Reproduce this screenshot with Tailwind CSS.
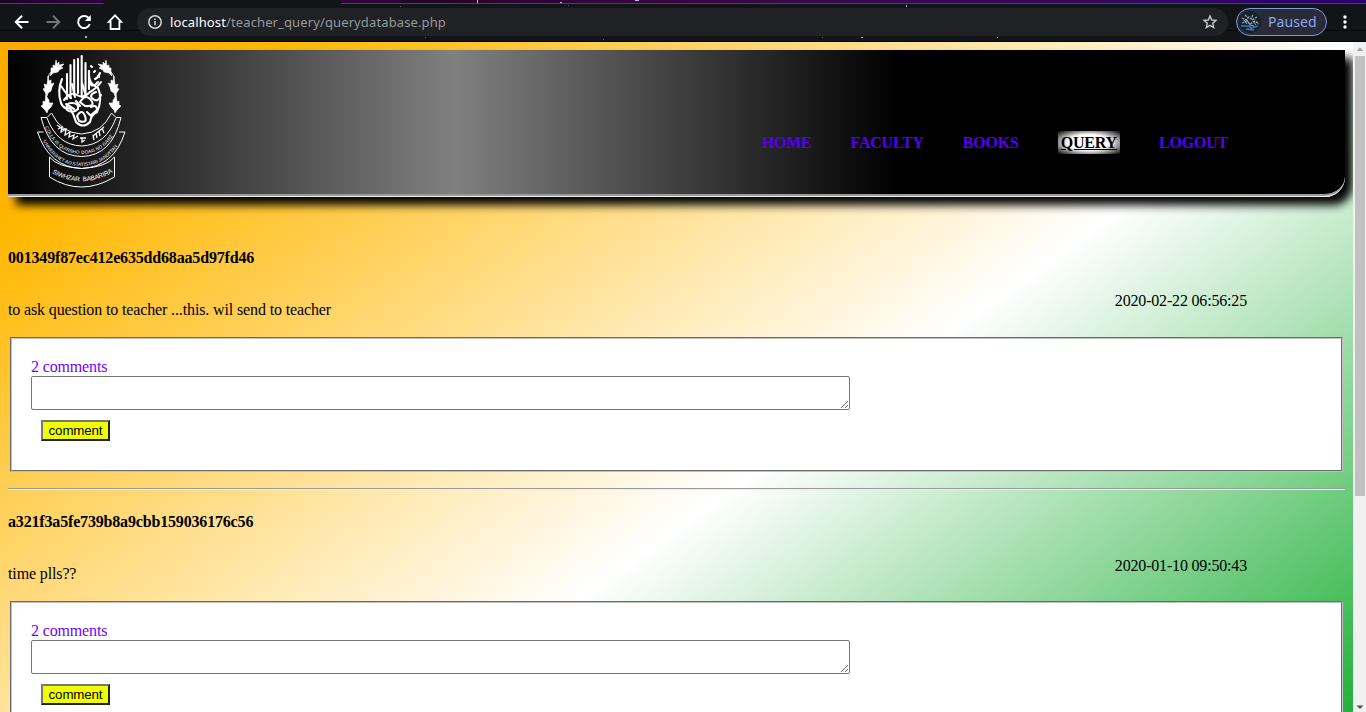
<!DOCTYPE html>
<html lang="en">
<head>
<meta charset="utf-8">
<title>querydatabase</title>
<script src="https://cdn.jsdelivr.net/npm/@tailwindcss/browser@4"></script>
</head>
<body class="flex h-[712px] w-[1366px] flex-col overflow-hidden bg-white">
<!-- browser toolbar -->
<header class="relative flex h-[42px] shrink-0 flex-col border-b border-black bg-[#121517]">
  <div class="flex h-1 shrink-0 border-b border-[#49474b] bg-linear-to-r from-[#08020f] via-[#38063f] to-[#2b0070]">
    <div class="h-[3px] w-[104px] rounded-br bg-linear-to-r from-[#1c0026] to-[#320044]"></div>
    <div class="h-1 w-[237px] bg-[#121517]"></div>
    <div class="h-[3px] w-[60px] rounded-bl bg-[#2c0435]"></div>
  </div>
  <div class="relative z-10 flex h-9 items-center">
    <svg class="ml-[13px] h-[18px] w-[18px]" viewBox="0 0 18 18" fill="none" stroke="#fff" stroke-width="2"><path d="M15.500 9H3M9 2.800 2.800 9 9 15.200"/></svg>
    <svg class="ml-[13px] h-[18px] w-[18px]" viewBox="0 0 18 18" fill="none" stroke="#737475" stroke-width="2"><path d="M2.500 9H15M9 2.800 15.200 9 9 15.200"/></svg>
    <svg class="ml-[13px] h-[18px] w-[18px]" viewBox="0 0 18 18" fill="none" stroke="#fff" stroke-width="2"><path d="M14.800 11A6 6 0 1 1 13.400 4.800L14.800 6.200"/><path d="M15.800 2v6H9.800z" fill="#fff" stroke="none"/></svg>
    <svg class="ml-[13px] h-[18px] w-[18px]" viewBox="0 0 18 18" fill="none" stroke="#fff" stroke-width="1.800"><path d="M9 2.400 2.800 8.800H4.600V16H13.400V8.800h1.800z"/></svg>
    <div class="ml-[13px] flex h-7 w-[1091px] items-center rounded-full bg-[#202124]">
      <svg class="ml-[10px] h-4 w-4" viewBox="0 0 16 16" fill="none" stroke="#d5d6d8" stroke-width="1.500"><circle cx="8" cy="8" r="6.200"/><path d="M8 7v4.300M8 4.400v1.600"/></svg>
      <div class="ml-[7px] flex whitespace-nowrap font-['Noto_Sans',sans-serif] text-[13px] leading-7 tracking-[0.12px] text-[#96989b]"><span class="text-white">localhost</span><span>/teacher_query/querydatabase.php</span></div>
      <svg class="mr-[9px] ml-auto h-[18px] w-[18px]" viewBox="0 0 18 18" fill="none" stroke="#c8c9cb" stroke-width="1.400"><path d="m9 3 1.700 4 4.300.4-3.300 2.900 1 4.200L9 12.300 5.300 14.500l1-4.200L3 7.400 7.300 7z"/></svg>
    </div>
    <div class="ml-2 flex h-7 w-[91px] items-center rounded-full border border-[#7e98e0] bg-[#292b39]">
      <svg class="ml-[2px] h-[22px] w-[22px]" viewBox="0 0 22 22"><circle cx="11" cy="11" r="11" fill="#17212b"/><path d="M3 7l4 2 3-3 3 3 5-3M3 12l5-2 3 3 5-3 4 3M6 4l3 3M14 4l-2 4" stroke="#8aa3b4" stroke-width="1.300" fill="none" stroke-dasharray="2.500 .8"/><path d="M2 15h8l2 2 7-2M7 18l8 1" stroke="#3975b5" stroke-width="1.700" fill="none"/><path d="M8 9l3 5 4 1M5 9l3 4M14 10l3 4" stroke="#a5adc0" fill="none"/></svg>
      <span class="ml-[7px] font-['Noto_Sans',sans-serif] text-[14px] leading-5 tracking-[0.1px] text-[#8fa6ea]">Paused</span>
    </div>
    <svg class="ml-[14px] h-4 w-[8px]" viewBox="0 0 8 16" fill="#fff"><circle cx="4" cy="3" r="1.700"/><circle cx="4" cy="8" r="1.700"/><circle cx="4" cy="13" r="1.700"/></svg>
  </div>
  <!-- star field of the theme -->
  <svg class="absolute inset-0 h-[42px] w-[1366px]" viewBox="0 0 1366 42"><path d="M0 30.500h139M1227 30.500h139" stroke="#050607"/><g fill="#e9e6f5"><path d="M477 0h1v3h-1zM560 2h2v1h-2zM635 0h4v1h-4zM906 5h1v2h-1zM861 37h2v1h-2zM997 37h1v1h-1z" opacity=".8"/><path d="M400 6h1v1h-1zM568 5h1v1h-1zM603 39h1v1h-1zM425 37h1v1h-1zM822 37h1v1h-1z" opacity=".35"/><path d="M85 36h2v2h-2z" fill="#b6b86a"/></g></svg>
</header>

<div class="flex min-h-0 flex-1">
  <!-- page -->
  <main class="h-[670px] w-[1353px] overflow-hidden bg-[linear-gradient(to_bottom_right,#ffaa00_0%,#ffb700_10%,#fff_50%,#00a41c_90%)] bg-[length:1353px_974px] px-2 pt-2 font-['Liberation_Serif',serif] text-[16px] leading-[18px] text-black">
    <div class="flex h-[147px] rounded-br-[20px] border-b-[3px] border-[#eee] [border-bottom-style:groove] bg-[linear-gradient(to_right,#000,#808080,#000,#000)] shadow-[8px_8px_10px_#000]">
      <svg class="ml-[29px] mt-[5px] h-[133px] w-[90px]" viewBox="0 0 90 133" fill="none" stroke="#fff">
        <!-- leaf wreath -->
        <g fill="#fff" stroke="#fff" stroke-width=".6">
          <path d="M19 5l1 4 2-2 0 3 5-1-3 3 2 1-4 2-1 2-5 1-3 3 1-4 0-4 2 0 0-3 2 1z"/>
          <path d="M11 21l1 5 2-1 0 4 3-1-2 4-1 4-3 2-1 3-2-4-2-3 2-1-1-4 3 1z"/>
          <path d="M9 40l2 4 1 1 0 3 4 0-2 4-3 3-1 3-2-3-4-4 2-1 0-4 2 1z"/>
          <path d="M69 5l-1 4-2-2 0 3-5-1 3 3-2 1 4 2 1 2 5 1 3 3-1-4 0-4-2 0 0-3-2 1z"/>
          <path d="M77 21l-1 5-2-1 0 4-3-1 2 4 1 4 3 2 1 3 2-4 2-3-2-1 1-4-3 1z"/>
          <path d="M79 40l-2 4-1 1 0 3-4 0 2 4 3 3 1 3 2-3 4-4-2-1 0-4-2 1z"/>
        </g>
        <path d="M14 17q-3 3-3 6M9 38v5M74 17q3 3 3 6M79 38v5" stroke-width=".8"/>
        <!-- calligraphy -->
        <g stroke-width="2.100" stroke-linecap="round">
          <path d="M25 24Q20 36 24 48Q27 55 33 53Q37 60 39 67Q46 74 53 67Q54 60 60 57Q66 44 61 33"/>
          <path d="M30 44V19M33.500 43V10M37.200 40V5M41 38V4M44.700 42V1M48.500 38V8M52 34V16"/>
          <path d="M27 45q7-9 13-5t13-3q7-4 11-10M24 31q6 9 10 12M52 27q3 7 9 0M52 16q-1 12 6 15M58 24q3-1 5-6"/>
          <path d="M30 55q-2-7 5-7t6 6q-5 5-11 1M43 47q6-9 11-2t-6 6zM40 61q5-8 8 0t-6 5zM54 52q6-3 6 3l-6 5M57 17l1-1M61 21l1 1M54 11l1 1M29 49l8 5M50 57l4 4"/>
          <path d="M59 37q-8 3-3 7t8-4M35 29l3 13M45 28l4 13M39 46l4 5"/>
        </g>
        <!-- ribbons -->
        <g stroke-width="1">
          <path d="M14.500 58Q24 78 44.500 79 65 78 74.500 58L79 62.500H84Q75 101 44.500 101.500 14 101 4 62.500H10z"/>
          <path d="M10 63Q20 90 44.500 91 69 90 79 63"/>
          <path d="M6.500 77H.5Q12 112 44.500 113.500 77 112 88 77H82"/>
          <path d="M12.500 102V122Q44 142 77.500 122V102M12.500 102Q20 112 44.500 113.500 70 112 77.500 102"/>
          <path d="M20 70l7 5M21 74l4-2-1 5 5-3-1 6 5-3-1 5 5-2-1 4 5-3M43 83h6M45 83v4l3-2M56 81l11-9M57 85l-1-5M60 83l-1-5M63 81l-1-5M67 78l-2-5" stroke-width="1.300"/>
        </g>
        <path id="arcA" d="M8 72Q19 98.500 44.500 99 70 98.500 81 71" stroke="none"/>
        <path id="arcB" d="M6 86Q18 110 44.500 111 71 110 84 85" stroke="none"/>
        <path id="arcC" d="M15 118Q45 135 76 117" stroke="none"/>
        <g fill="#fff" stroke="none" font-family="Liberation Sans" font-size="4.600">
          <text><textPath href="#arcA" textLength="86">COLLA IS QUIRSHO DOAG NO GARZ</textPath></text>
          <text><textPath href="#arcB" textLength="91">UNIVERSHET AO STATISTARI JANOTTAN</textPath></text>
          <text font-size="6.500"><textPath href="#arcC" textLength="64" xml:space="preserve">SIWHZAR  BABARIRA</textPath></text>
        </g>
      </svg>
      <nav class="mt-[81px] ml-auto flex h-6 gap-[33px] pr-[114px] font-bold leading-[24px] tracking-[-0.2px] text-[#5500f5]">
        <a class="px-[3px]">HOME</a><a class="px-[3px]">FACULTY</a><a class="px-[3px]">BOOKS</a><a class="mx-[3px] h-[23px] bg-[radial-gradient(ellipse_farthest-corner,#fff_48%,#000_100%)] px-[3px] text-black underline">QUERY</a><a class="px-[3px]">LOGOUT</a>
      </nav>
    </div>

    <section class="h-[291px] pt-[52px]">
      <h4 class="font-bold tracking-[-0.17px]">001349f87ec412e635dd68aa5d97fd46</h4>
      <div class="mt-[25px] flex justify-between pr-[98px]"><p class="pt-[9px] tracking-[-0.13px]">to ask question to teacher ...this. wil send to teacher</p><time class="tracking-[-0.18px]">2020-02-22 06:56:25</time></div>
      <div class="mx-[2px] mt-[18px] h-[135px] border-2 border-[#c0c0c0] [border-style:groove] bg-white pl-[19px] pt-[19px]">
        <p class="tracking-[-0.15px] text-[#7300ff]">2 comments</p>
        <textarea class="block h-[34px] w-[819px] rounded-[2px] border border-[#767676] bg-white"></textarea>
        <button class="mt-[10px] ml-[10px] block h-[21px] w-[69px] border-2 border-t-[#767676] border-r-[#222] border-b-[#222] border-l-[#767676] bg-[#f2ff00] font-['Liberation_Sans',sans-serif] text-[13.33px] leading-[17px] tracking-[-0.15px]">comment</button>
      </div>
    </section>
    <hr class="border-t border-b border-t-[#9a9a9a] border-b-[#eee]">
    <section class="pt-[23px]">
      <h4 class="font-bold tracking-[-0.17px]">a321f3a5fe739b8a9cbb159036176c56</h4>
      <div class="mt-[26px] flex justify-between pr-[98px]"><p class="pt-[8px] tracking-[-0.13px]">time plls??</p><time class="tracking-[-0.18px]">2020-01-10 09:50:43</time></div>
      <div class="mx-[2px] mt-[18px] h-[135px] border-2 border-[#c0c0c0] [border-style:groove] bg-white pl-[19px] pt-[19px]">
        <p class="tracking-[-0.15px] text-[#7300ff]">2 comments</p>
        <textarea class="block h-[34px] w-[819px] rounded-[2px] border border-[#767676] bg-white"></textarea>
        <button class="mt-[10px] ml-[10px] block h-[21px] w-[69px] border-2 border-t-[#767676] border-r-[#222] border-b-[#222] border-l-[#767676] bg-[#f2ff00] font-['Liberation_Sans',sans-serif] text-[13.33px] leading-[17px] tracking-[-0.15px]">comment</button>
      </div>
    </section>
  </main>
  <!-- scrollbar -->
  <aside class="relative z-10 flex w-[13px] flex-col items-center bg-[#f1f1f1]">
    <svg class="h-[14px] w-[13px] shrink-0" viewBox="0 0 13 14" fill="#a3a3a3"><path d="M7 5.500 10.500 9h-7z"/></svg>
    <div class="ml-px h-[440px] w-[10px] bg-[#c1c1c1]"></div>
    <svg class="mt-auto h-[14px] w-[13px] shrink-0" viewBox="0 0 13 14" fill="#505050"><path d="M7 11 3.500 7.500h7z"/></svg>
  </aside>
</div>
</body>
</html>
